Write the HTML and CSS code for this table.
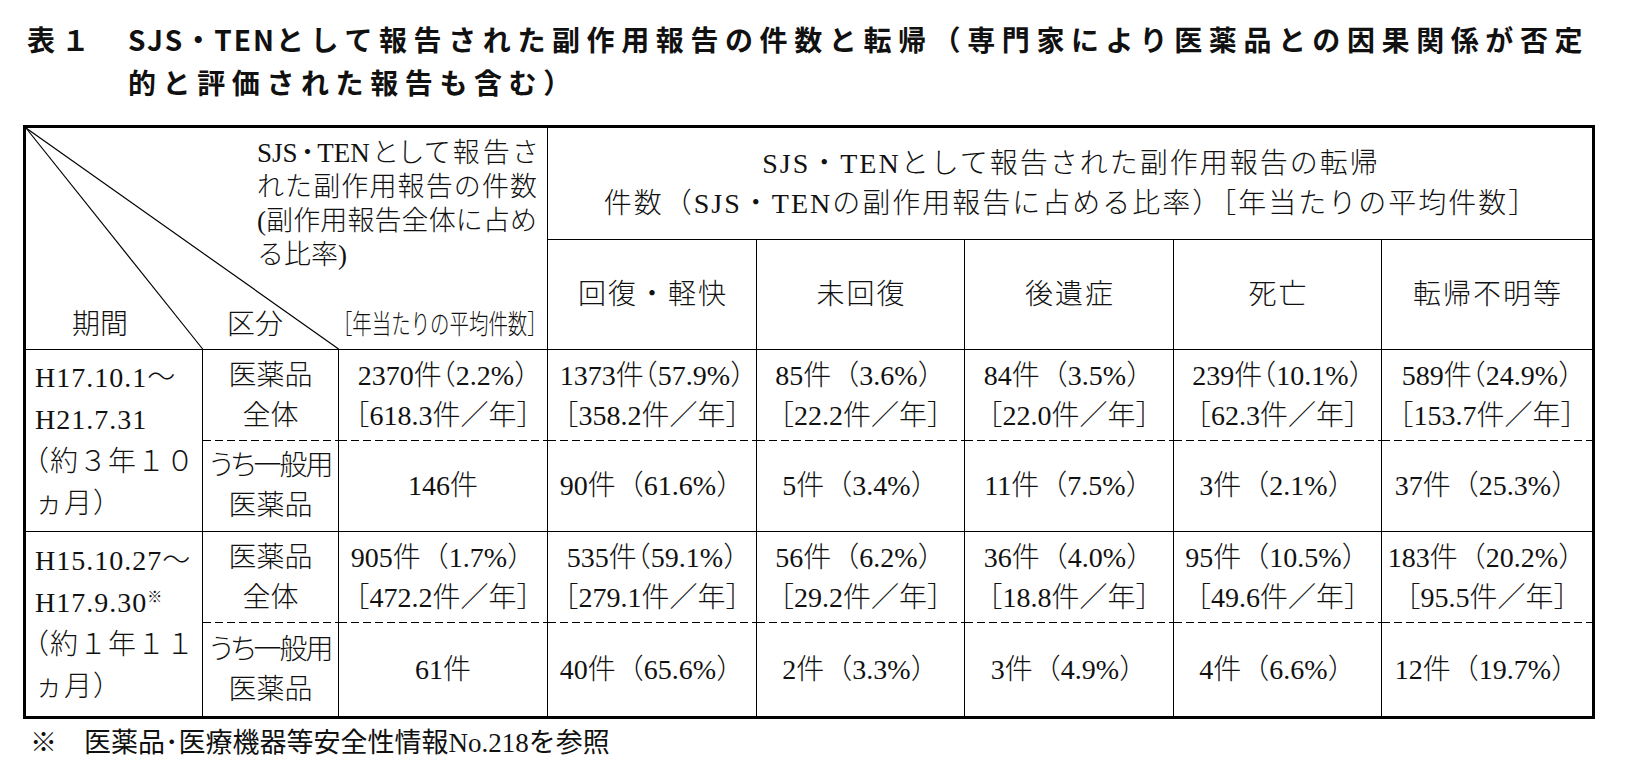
FILE: index.html
```html
<!DOCTYPE html>
<html lang="ja">
<head>
<meta charset="utf-8">
<title>表１ SJS・TENとして報告された副作用報告の件数と転帰</title>
<link rel="stylesheet" href="styles.css">
</head>
<body>
<div class="page">
  <h1 class="title">
    <span class="title-no">表１</span>
    <span class="title-text"><span class="latin">SJS・TEN</span>として報告された副作用報告の件数と転帰（専門家により医薬品との因果関係が否定<br>的と評価された報告も含む）</span>
  </h1>

  <table class="report">
    <colgroup>
      <col class="c-period">
      <col class="c-kind">
      <col class="c-count">
      <col class="c-o1">
      <col class="c-o2">
      <col class="c-o3">
      <col class="c-o4">
      <col class="c-o5">
    </colgroup>
    <thead>
      <tr class="h1">
        <th class="diag" colspan="3" rowspan="2">
          <svg class="diag-lines" aria-hidden="true">
            <line x1="0" y1="0" x2="33.9%" y2="100%"></line>
            <line x1="0" y1="0" x2="60%" y2="100%"></line>
          </svg>
          <div class="diag-inner">
            <div class="diag-note">
              <span class="jl palt">SJS・TENとして報告さ</span>
              <span class="jl">れた副作用報告の件数</span>
              <span class="jl">(副作用報告全体に占め</span>
              <span>る比率)</span>
            </div>
            <div class="diag-labels">
              <span class="lbl-period">期間</span>
              <span class="lbl-kind">区分</span>
              <span class="lbl-avg"><span class="narrow">［年当たりの平均件数］</span></span>
            </div>
          </div>
        </th>
        <th class="outcome-head" colspan="5">SJS・TENとして報告された副作用報告の転帰<br>件数（SJS・TENの副作用報告に占める比率）［年当たりの平均件数］</th>
      </tr>
      <tr class="h2">
        <th>回復・軽快</th>
        <th>未回復</th>
        <th>後遺症</th>
        <th>死亡</th>
        <th>転帰不明等</th>
      </tr>
    </thead>
    <tbody>
      <tr class="grp-a">
        <td class="period" rowspan="2">H17.10.1～<br>H21.7.31<br>（約３年１０<br>ヵ月）</td>
        <td>医薬品<br>全体</td>
        <td><div class="tight">2370件（2.2%）</div><div class="avg">［618.3件／年］</div></td>
        <td><div class="tight">1373件（57.9%）</div><div class="avg">［358.2件／年］</div></td>
        <td><div>85件（3.6%）</div><div class="avg">［22.2件／年］</div></td>
        <td><div>84件（3.5%）</div><div class="avg">［22.0件／年］</div></td>
        <td><div class="tight">239件（10.1%）</div><div class="avg">［62.3件／年］</div></td>
        <td><div class="tight">589件（24.9%）</div><div class="avg">［153.7件／年］</div></td>
      </tr>
      <tr class="grp-b">
        <td><span class="squeeze">うち一般用</span><br>医薬品</td>
        <td>146件</td>
        <td>90件（61.6%）</td>
        <td>5件（3.4%）</td>
        <td>11件（7.5%）</td>
        <td>3件（2.1%）</td>
        <td>37件（25.3%）</td>
      </tr>
    </tbody>
    <tbody>
      <tr class="grp-a">
        <td class="period" rowspan="2">H15.10.27～<br>H17.9.30<sup class="mark">※</sup><br>（約１年１１<br>ヵ月）</td>
        <td>医薬品<br>全体</td>
        <td><div>905件（1.7%）</div><div class="avg">［472.2件／年］</div></td>
        <td><div class="tight">535件（59.1%）</div><div class="avg">［279.1件／年］</div></td>
        <td><div>56件（6.2%）</div><div class="avg">［29.2件／年］</div></td>
        <td><div>36件（4.0%）</div><div class="avg">［18.8件／年］</div></td>
        <td><div>95件（10.5%）</div><div class="avg">［49.6件／年］</div></td>
        <td><div>183件（20.2%）</div><div class="avg">［95.5件／年］</div></td>
      </tr>
      <tr class="grp-b">
        <td><span class="squeeze">うち一般用</span><br>医薬品</td>
        <td>61件</td>
        <td>40件（65.6%）</td>
        <td>2件（3.3%）</td>
        <td>3件（4.9%）</td>
        <td>4件（6.6%）</td>
        <td>12件（19.7%）</td>
      </tr>
    </tbody>
  </table>

  <p class="note">※　医薬品･医療機器等安全性情報No.218を参照</p>
</div>
</body>
</html>
```

FILE: styles.css
```css
* {
  box-sizing: border-box;
}

html,
body {
  margin: 0;
  padding: 0;
  background: #ffffff;
}

body {
  color: #111111;
  font-family: "Liberation Serif", "Noto Sans CJK JP", serif;
}

.page {
  width: 1649px;
  padding: 0 0 0 23px;
}

/* ---------- title ---------- */
.title {
  margin: 0;
  padding: 18px 0 0 4px;
  display: grid;
  grid-template-columns: 101px auto;
  font-family: "Noto Sans CJK JP", sans-serif;
  font-size: 28px;
  font-weight: 700;
  line-height: 43px;
  letter-spacing: 6.6px;
  color: #111111;
}

.title-text {
  white-space: nowrap;
}

.title .latin {
  letter-spacing: 2px;
}

/* ---------- table ---------- */
.report {
  margin-top: 21px;
  width: 1572px;
  table-layout: fixed;
  border-collapse: separate;
  border-spacing: 0;
  border: 3px solid #000000;
  font-size: 28px;
  font-weight: 300;
}

.c-period { width: 177px; }
.c-kind   { width: 136px; }
.c-count  { width: 209px; }
.c-o1     { width: 209px; }
.c-o2     { width: 208px; }
.c-o3     { width: 209px; }
.c-o4     { width: 208px; }
.c-o5     { width: 210px; }

.report th,
.report td {
  padding: 0;
  border: 0;
  border-right: 1px solid #000000;
  font-weight: 300;
  text-align: center;
  vertical-align: middle;
  line-height: 40px;
  white-space: nowrap;
}

.report th:last-child,
.report td:last-child {
  border-right: 0;
}

.report .h1 { height: 112px; }
.report .h2 { height: 110px; }

/* diagonal header cell */
.report .diag {
  position: relative;
  vertical-align: top;
  border-bottom: 1px solid #000000;
}

.diag-lines {
  position: absolute;
  left: 0;
  top: 0;
  width: 100%;
  height: 100%;
  overflow: visible;
}

.diag-lines line {
  stroke: #000000;
  stroke-width: 1.2;
}

.diag-inner {
  position: relative;
  display: flex;
  flex-direction: column;
  height: 221px;
}

.diag-note {
  align-self: flex-end;
  width: 280px;
  margin: 8px 10px 0 0;
  font-size: 27px;
  line-height: 34px;
  text-align: left;
  white-space: nowrap;
}

.diag-note span {
  display: block;
}

.diag-note .jl {
  text-align: justify;
  text-align-last: justify;
}

.palt {
  font-feature-settings: "palt";
}

.diag-labels {
  margin-top: auto;
  margin-bottom: 4px;
  display: grid;
  grid-template-columns: 177px 136px minmax(0, 1fr);
  line-height: 40px;
}

.lbl-period {
  text-align: left;
  padding-left: 46px;
}

.lbl-kind {
  text-align: left;
  padding-left: 24px;
}

.lbl-avg {
  min-width: 0;
  display: flex;
  justify-content: flex-end;
  padding-right: 10px;
}

.narrow {
  flex: none;
  display: inline-block;
  white-space: nowrap;
  font-size: 27px;
  font-feature-settings: "halt";
  transform: scaleX(0.72);
  transform-origin: right center;
}

.report .outcome-head {
  border-bottom: 1px solid #000000;
  letter-spacing: 2px;
  padding-left: 2px;
}

.report .h2 th {
  border-bottom: 1px solid #000000;
  letter-spacing: 2px;
  padding-left: 2px;
}

/* body rows */
.report .grp-a,
.report .grp-b {
  height: 91px;
}

.report tbody:last-child .grp-b {
  height: 93px;
}

.report .grp-a td {
  background-image: linear-gradient(to right, #000000 8px, transparent 8px);
  background-repeat: repeat-x;
  background-position: left bottom;
  background-size: 12px 1px;
}

.report .grp-a td.period {
  background: none;
  border-bottom: 1px solid #000000;
}

.report .grp-b td {
  border-bottom: 1px solid #000000;
}

.report tbody:last-child td,
.report tbody:last-child .grp-a td.period,
.report tbody:last-child .grp-b td {
  border-bottom: 0;
}

.report td.period {
  text-align: left;
  padding-left: 9px;
  line-height: 42px;
  letter-spacing: 1px;
  font-feature-settings: "halt";
}

.mark {
  font-size: 15px;
  line-height: 0;
  vertical-align: 10px;
}

.tight {
  font-feature-settings: "halt";
}

.avg {
  font-feature-settings: "halt";
}

.squeeze {
  font-feature-settings: "palt";
  letter-spacing: -2px;
}

/* footnote */
.note {
  margin: 7px 0 0 7px;
  font-size: 27px;
  line-height: 34px;
}
```
